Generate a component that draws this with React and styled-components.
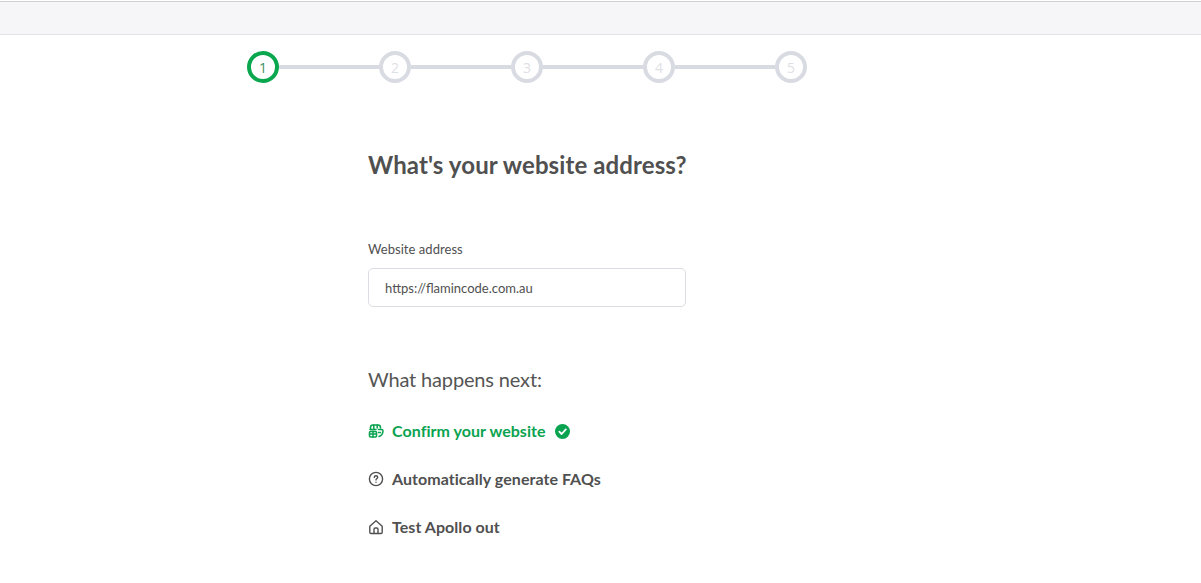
import React from 'react';
import styled, { createGlobalStyle } from 'styled-components';

const GlobalStyle = createGlobalStyle`
  html, body {
    margin: 0;
    padding: 0;
    background: #fff;
    font-family: Lato, "Liberation Sans", sans-serif;
    color: #4a4a4a;
  }
`;

const Page = styled.div`
  width: 1201px;
  height: 583px;
  overflow: hidden;
`;

const TopBar = styled.div`
  height: 32px;
  margin-top: 1px;
  background: #f6f6f8;
  border-top: 1px solid #cfcfd4;
  border-bottom: 1px solid #e3e3e6;
`;

const Stepper = styled.div`
  display: flex;
  align-items: center;
  margin: 16px 0 0 247px;
`;

const Circle = styled.div`
  box-sizing: border-box;
  width: 32px;
  height: 32px;
  flex: none;
  border-radius: 50%;
  border: 4px solid ${p => (p.$active ? '#0aa74f' : '#d9dbe3')};
  color: ${p => (p.$active ? '#3f8f63' : '#dfe0e6')};
  display: flex;
  align-items: center;
  justify-content: center;
  font-family: "Open Sans", sans-serif;
  font-size: 14px;
`;

const Connector = styled.div`
  width: 100px;
  height: 4px;
  background: #d9dbe3;
`;

const Content = styled.div`
  width: 318px;
  margin: 64px 0 0 368px;
`;

const Title = styled.h1`
  margin: 0;
  font-size: 24px;
  line-height: 36px;
  font-weight: 700;
  letter-spacing: 0.11px;
  white-space: nowrap;
  color: #505050;
`;

const Label = styled.label`
  display: block;
  margin-top: 56px;
  font-size: 13px;
  line-height: 20px;
  letter-spacing: 0.05px;
  color: #505050;
`;

const Input = styled.input`
  box-sizing: border-box;
  display: block;
  width: 100%;
  height: 39px;
  margin-top: 9px;
  padding: 0 16px;
  border: 1px solid #dcdde2;
  border-radius: 5px;
  outline: none;
  font-family: Lato, sans-serif;
  font-size: 13px;
  color: #505050;
`;

const NextTitle = styled.h2`
  margin: 57px 0 0;
  font-size: 20px;
  line-height: 30px;
  font-weight: 400;
  letter-spacing: -0.16px;
  color: #555;
`;

const NextList = styled.ul`
  list-style: none;
  margin: 24px 0 0;
  padding: 0;
  display: flex;
  flex-direction: column;
  gap: 24px;
`;

const NextItem = styled.li`
  display: flex;
  align-items: center;
  height: 24px;
  font-size: 16px;
  font-weight: 700;
  letter-spacing: 0.05px;
  color: ${p => (p.$done ? '#0aa350' : '#505050')};

  svg {
    flex: none;
    margin-top: 2px;
  }
`;

const ItemText = styled.span`
  margin: 0 9px 0 8px;
`;

const BrowserIcon = () => (
  <svg width="16" height="16" viewBox="0 0 16 16" fill="none" stroke="currentColor" strokeWidth="1.5" strokeLinecap="round" strokeLinejoin="round">
    <path d="M2.5 6.5V4.5C2.5 3 3.5 2 5 2H10C11.5 2 12.5 3 12.5 4.5V5" />
    <path d="M2 6.5H8" />
    <path d="M5.8 2V6.5M9.2 2V5" />
    <rect x="1.5" y="8.5" width="7" height="5.5" rx="1" />
    <path d="M1.5 11H8.5M5 8.5V14" />
    <path d="M10.5 6.5H13.5C14.5 6.5 15 7.2 15 8C15 10.5 13.3 12.6 11 13.5" />
    <path d="M10.5 9.5H12.5" />
  </svg>
);

const QuestionIcon = () => (
  <svg width="16" height="16" viewBox="0 0 16 16" fill="none" stroke="currentColor" strokeWidth="1.4" strokeLinecap="round" strokeLinejoin="round">
    <circle cx="8" cy="8" r="6.6" />
    <path d="M6.3 6.4C6.3 5.4 7.1 4.8 8 4.8C9 4.8 9.7 5.5 9.7 6.3C9.7 7.5 8 7.6 8 8.9" />
    <path d="M8 11.1V11.2" />
  </svg>
);

const HomeIcon = () => (
  <svg width="16" height="16" viewBox="0 0 16 16" fill="none" stroke="currentColor" strokeWidth="1.4" strokeLinecap="round" strokeLinejoin="round">
    <path d="M1.8 7.2L8 1.8L14.2 7.2V13.2C14.2 14 13.7 14.5 13 14.5H3C2.3 14.5 1.8 14 1.8 13.2Z" />
    <path d="M6 14.5V10.2C6 9.5 6.5 9 7.2 9H8.8C9.5 9 10 9.5 10 10.2V14.5" />
  </svg>
);

const CheckBadge = () => (
  <svg width="15" height="15" viewBox="0 0 15 15">
    <circle cx="7.5" cy="7.5" r="7.5" fill="#0aa350" />
    <path d="M4.3 7.7L6.6 10L10.8 5.4" fill="none" stroke="#fff" strokeWidth="1.8" strokeLinecap="round" strokeLinejoin="round" />
  </svg>
);

const steps = [1, 2, 3, 4, 5];

export default function App() {
  return (
    <Page>
      <GlobalStyle />
      <TopBar />
      <Stepper>
        {steps.map(n => (
          <React.Fragment key={n}>
            <Circle $active={n === 1}>{n}</Circle>
            {n < steps.length && <Connector />}
          </React.Fragment>
        ))}
      </Stepper>
      <Content>
        <Title>What's your website address?</Title>
        <Label htmlFor="website">Website address</Label>
        <Input id="website" defaultValue="https://flamincode.com.au" />
        <NextTitle>What happens next:</NextTitle>
        <NextList>
          <NextItem $done>
            <BrowserIcon />
            <ItemText>Confirm your website</ItemText>
            <CheckBadge />
          </NextItem>
          <NextItem>
            <QuestionIcon />
            <ItemText>Automatically generate FAQs</ItemText>
          </NextItem>
          <NextItem>
            <HomeIcon />
            <ItemText>Test Apollo out</ItemText>
          </NextItem>
        </NextList>
      </Content>
    </Page>
  );
}
